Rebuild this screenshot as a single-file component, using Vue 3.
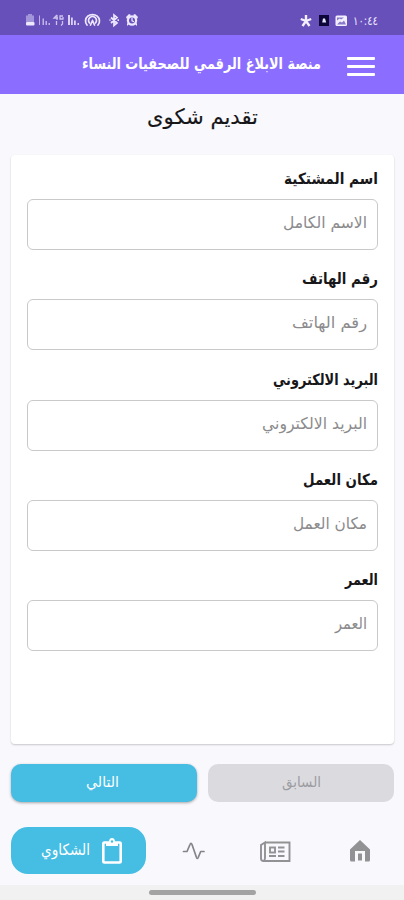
<script setup>
const fields = [
  { id: 'name', label: 'اسم المشتكية', hint: 'الاسم الكامل', lw: 94, hw: 84 },
  { id: 'phone', label: 'رقم الهاتف', hint: 'رقم الهاتف', lw: 76, hw: 75 },
  { id: 'email', label: 'البريد الالكتروني', hint: 'البريد الالكتروني', lw: 105, hw: 105 },
  { id: 'work', label: 'مكان العمل', hint: 'مكان العمل', lw: 75, hw: 74 },
  { id: 'age', label: 'العمر', hint: 'العمر', lw: 33, hw: 32 },
]
</script>

<template>
  <main class="screen" dir="rtl">
    <header>
      <div class="status" dir="ltr">
        <svg class="status-left" width="114" height="16" viewBox="0 0 114 16" fill="#eee8ff">
          <path d="M3 1h4v1.500h2V9H1V2.500h2z" opacity=".45" /><rect x="1" y="9" width="8.500" height="3.500" rx="1" />
          <path d="M14 2.500h1V12h-1zM17.500 5.500h1.500V12h-1.500zM20.500 8H22v4h-1.500zM23.500 10H25v2h-1.500z" opacity=".65" />
          <path d="M32 2l-3 3h4M32 2v5M38 3h-3v3h3V4M31.500 8v4M37.500 8v3l-1.500 1.500" fill="none" stroke="#eee8ff" stroke-width="1.300" opacity=".75" />
          <path d="M43 2h2v10h-2zM46 4.500h1.800V12H46zM49 7.500h1.800V12H49zM52.500 10H54v2h-1.500z" opacity=".85" />
          <g fill="none" stroke="#eee8ff" stroke-width="1.700" stroke-linecap="round"><path d="M62 12a7 6.500 0 1 1 11 0M64.500 10a4 3.800 0 1 1 6 0" /><path d="M67.500 7.500L65.500 12M67.500 7.500l2 4.500" /></g>
          <path d="M86 4.500l6 5.500-3 2.500V2l3 2.500-6 5.500M84.500 7.200h1M92.500 7.200H94" fill="none" stroke="#eee8ff" stroke-width="1.700" />
          <g><circle cx="107" cy="7.500" r="5.200" /><path d="M101 4l3-3 2 1-4 4zM113 4l-3-3-2 1 4 4zM102 10l2 1-2 2zM112 10l-2 1 2 2z" /><circle cx="107" cy="7.500" r="3" fill="#6750ba" /><path d="M107 5v2.800l2 1" fill="none" stroke="#eee8ff" stroke-width="1.200" /></g>
        </svg>
        <div class="status-right">
          <svg width="48" height="14" viewBox="0 0 48 14">
            <path d="M6 1v6M.8 5L6 7l5.200-2M2.500 12L6 7l3.500 5" fill="none" stroke="#f3efff" stroke-width="2.400" />
            <path d="M19 1h10v11H19z" fill="#0c0738" /><path d="M23 4.500h2l1.200 4h-4z" fill="#e8e4ff" />
            <rect x="35.500" y="1.500" width="11.500" height="10.500" rx="1.500" fill="#f3efff" /><path d="M37 10.500l3-3 2 1 2-2 2 4zM37 3.500h7l-3 2-1.500-1-2.500 2z" fill="#8a79cb" />
          </svg>
          <svg class="clock" width="27" height="14" viewBox="0 0 27 14"><text x="1" y="11" textLength="25" lengthAdjust="spacingAndGlyphs" direction="ltr">١٠:٤٤</text></svg>
        </div>
      </div>
      <div class="appbar">
        <button class="menu" aria-label="القائمة"><i></i><i></i><i></i></button>
        <svg class="brand" width="240" height="28"><text x="240" y="18.500" textLength="239" lengthAdjust="spacingAndGlyphs">منصة الابلاغ الرقمي للصحفيات النساء</text></svg>
      </div>
    </header>

    <h1><svg width="112" height="34"><text x="112" y="22" textLength="111" lengthAdjust="spacingAndGlyphs">تقديم شكوى</text></svg></h1>

    <section class="card">
      <div v-for="f in fields" :key="f.id" class="field">
        <div class="label"><svg width="120" height="28"><text x="120" y="17" :textLength="f.lw" lengthAdjust="spacingAndGlyphs">{{ f.label }}</text></svg></div>
        <div class="input"><svg width="120" height="30"><text x="120" y="17.500" :textLength="f.hw" lengthAdjust="spacingAndGlyphs">{{ f.hint }}</text></svg></div>
      </div>
    </section>

    <div class="actions">
      <button class="prev"><svg width="40" height="26"><text x="40" y="17" textLength="39" lengthAdjust="spacingAndGlyphs">السابق</text></svg></button>
      <button class="next"><svg width="34" height="26"><text x="34" y="17" textLength="33" lengthAdjust="spacingAndGlyphs">التالي</text></svg></button>
    </div>

    <nav>
      <svg class="home" width="22" height="24" viewBox="0 0 22 24"><path d="M11 1l10 9.500V21q0 1.500-1.500 1.500H16V12H6v10.500H2.500Q1 22.500 1 21V10.500z" fill="#929294" /><path d="M9 14.500h4v7H9z" fill="#929294" /></svg>
      <svg class="news" width="32" height="22" viewBox="0 0 32 22" fill="none" stroke="#929294" stroke-width="1.900"><path d="M6 1.500h24.500v18.500H4.500Q2 20 2 17.500V4l4-2.500v15.500q0 2.500-1.500 3" /><rect x="11" y="6.500" width="5" height="5" /><path d="M19 6.500h6.500M19 10.500h6.500M10 15h7M19 15h6.500" /></svg>
      <svg class="pulse" width="24" height="22" viewBox="0 0 24 22" fill="none" stroke="#858587" stroke-width="1.700" stroke-linecap="round" stroke-linejoin="round"><path d="M1.500 11.500H5L8 4.500q1-2.500 2 0l4.500 13q.8 2 1.700 0l2.500-6H22" /></svg>
      <button class="tab">
        <svg width="22" height="28" viewBox="0 0 22 28"><rect x="2.300" y="5.500" width="17.400" height="20" rx="1" fill="none" stroke="#fff" stroke-width="2.600" /><path d="M5 5h3q0-4 3-4t3 4h3v4H5z" fill="#fff" /><circle cx="11" cy="4.500" r="1.200" fill="#46bde3" /></svg>
        <svg width="50" height="28"><text x="50" y="17.500" textLength="49" lengthAdjust="spacingAndGlyphs">الشكاوي</text></svg>
      </button>
    </nav>
    <footer><i></i></footer>
  </main>
</template>

<style>
body { background: #f8f8fd; }
</style>

<style scoped>
* { box-sizing: border-box; }
.screen { width: 404px; height: 900px; background: #f8f8fd; font-family: "DejaVu Sans Condensed", "DejaVu Sans", sans-serif; display: flex; flex-direction: column; overflow: hidden; }
svg { display: block; flex: none; overflow: visible; }
button { border: 0; padding: 0; font: inherit; background: none; }
.status { height: 35px; background: #6750ba; display: flex; align-items: center; justify-content: space-between; padding: 7px 25px 0 25px; }
.status-right { display: flex; align-items: center; gap: 4px; }
.clock text { fill: #eee8ff; font-size: 12px; }
.appbar { height: 59px; background: #8b6eff; display: flex; align-items: center; padding: 0 29px 2px; gap: 26px; }
.menu { width: 28px; display: flex; flex-direction: column; gap: 5px; padding-top: 6px; }
.menu i { height: 3px; background: #fff; border-radius: 1px; }
.brand text { fill: #fff; font-size: 15.500px; font-weight: 700; }
h1 { margin: 0; height: 61px; padding-top: 8px; display: flex; justify-content: center; font-weight: 400; }
h1 text { font-size: 21px; fill: #161618; stroke: #161618; stroke-width: .15px; }
.card { margin: 0 10px 0 11px; height: 589px; padding: 12px 16px; background: #fff; border-radius: 4px; box-shadow: 0 1px 2px #0003; }
.field { height: 100.260px; }
.label { height: 32px; }
.label text { font-size: 15.500px; font-weight: 700; fill: #171719; }
.input { height: 51px; border: 1px solid #c9c9c9; border-radius: 6px; padding: 10px; }
.input text { font-size: 16px; fill: #8b8b8d; }
.actions { margin: 20px 10px 0 11px; height: 38px; display: flex; gap: 11px; }
.actions button { flex: 1; border-radius: 10px; display: flex; align-items: center; justify-content: center; }
.prev { background: #dbdbdf; }
.next { background: #46bde3; box-shadow: 0 1px 3px #0005; }
.actions text { font-size: 14.500px; }
.prev text { fill: #9c9ca2; }
.next text { fill: #fff; }
.actions .next svg { margin-right: 4px; }
nav { margin-top: 25px; height: 58px; display: flex; padding: 0 33px 0 11px; }
.home { margin-top: 12px; }
.news { margin: 14px 58px 0 0; }
.pulse { margin: 13px 53px 0 0; }
.tab { margin-right: auto; width: 135px; height: 47px; border-radius: 17px; background: #46bde3; display: flex; align-items: center; padding-right: 23px; gap: 11px; }
.tab text { font-size: 15.500px; fill: #fff; }
footer { height: 15px; background: #f1f1f2; display: flex; justify-content: center; padding: 5px 0 0 1px; }
footer i { width: 107px; height: 5px; border-radius: 3px; background: #a3a3a3; }
</style>
